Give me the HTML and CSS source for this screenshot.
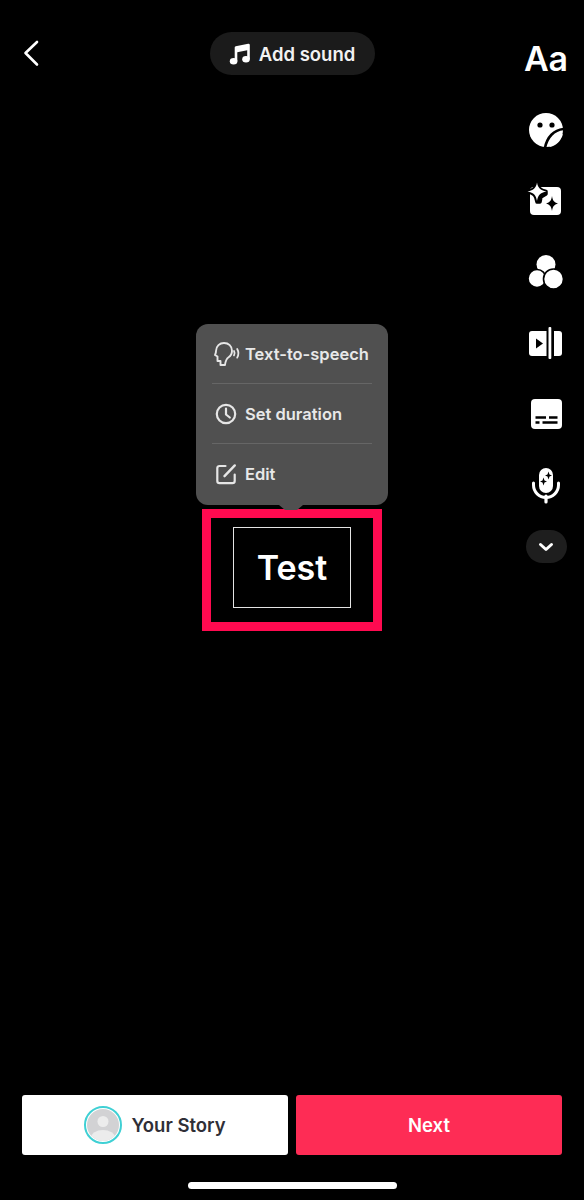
FILE: index.html
```html
<!DOCTYPE html>
<html lang="en">
<head>
<meta charset="utf-8">
<title>Story editor</title>
<link rel="stylesheet" href="styles.css">
</head>
<body>
<div class="screen">
  <div class="stage">
    <div class="back-col">
      <svg class="back-icon" width="20" height="30" viewBox="0 0 20 30"><path d="M15 4 L3.500 15 L15 26.500" fill="none" stroke="#fff" stroke-width="2.600" stroke-linecap="round" stroke-linejoin="round"/></svg>
    </div>
    <div class="canvas">
      <div class="sound-pill">
        <svg width="22" height="24" viewBox="0 0 22 24"><path d="M7 19 V5.500 L19.500 3 V17" fill="none" stroke="#fff" stroke-width="2.600" stroke-linejoin="round"/><path d="M7 6 L19.500 3.500 V8 L7 10.500 Z" fill="#fff"/><ellipse cx="4.600" cy="19.200" rx="3.800" ry="3.200"/><ellipse cx="17" cy="17.200" rx="3.800" ry="3.200"/></svg>
        <span>Add sound</span>
      </div>
      <div class="popup">
        <div class="popup-row">
          <svg class="popup-icon" width="28" height="26" viewBox="0 0 28 26"><path d="M12 24 H7.500 V20 H4.500 V15.500 L2 14 C2.600 12.600 3 12 3 10 C3 5 6.800 2 11 2 C15.600 2 19 5.200 19 9.800 C19 13 17.600 15 15.600 16.200 C14 17.200 12.600 19 12 24 Z" fill="none" stroke="#e6e6e6" stroke-width="1.900" stroke-linejoin="round"/><path d="M21 10 C21.800 11.400 21.800 13 21 14.400 M24.200 8 C25.800 10.800 25.800 13.800 24.200 16.600" fill="none" stroke="#e6e6e6" stroke-width="1.800" stroke-linecap="round"/></svg>
          <span>Text-to-speech</span>
        </div>
        <div class="popup-row">
          <svg class="popup-icon" width="28" height="26" viewBox="0 0 28 26"><circle cx="13" cy="13" r="9.200" fill="none" stroke="#e6e6e6" stroke-width="2.200"/><path d="M13 7.500 V13.500 L16.800 16.500" fill="none" stroke="#e6e6e6" stroke-width="2.200" stroke-linecap="round" stroke-linejoin="round"/></svg>
          <span>Set duration</span>
        </div>
        <div class="popup-row">
          <svg class="popup-icon" width="28" height="26" viewBox="0 0 28 26"><path d="M12.500 5 H6.500 A2.200 2.200 0 0 0 4.300 7.200 V20 A2.200 2.200 0 0 0 6.500 22.200 H19.500 A2.200 2.200 0 0 0 21.700 20 V13.500" fill="none" stroke="#e6e6e6" stroke-width="2.200" stroke-linecap="round"/><path d="M21.800 4.400 L11.500 15.200" fill="none" stroke="#e6e6e6" stroke-width="2.400" stroke-linecap="round"/></svg>
          <span>Edit</span>
        </div>
        <i class="popup-arrow"></i>
      </div>
      <div class="highlight">
        <div class="text-box">Test</div>
      </div>
    </div>
    <div class="rail">
      <div class="tool tool-text">Aa</div>
      <svg class="tool" width="40" height="40" viewBox="0 0 40 40"><circle cx="20" cy="20" r="17"/><circle cx="14" cy="15" r="2.600" fill="#000"/><circle cx="26" cy="15" r="2.600" fill="#000"/><path d="M37.500 19 C28 20 21 27 19 38" fill="none" stroke="#000" stroke-width="2.600"/><path d="M37 24 C31 26 25 31 23.500 37 C30 36 35 31 37 24 Z"/></svg>
      <svg class="tool" width="40" height="40" viewBox="0 0 40 40"><rect x="4" y="6" width="31" height="28" rx="4"/><path d="M11 1 C12 7 14 9 20 10.500 L20 13 L15 16 L14 21 L11 21 C10 14 8 12 1 10.500 C8 9 10 7 11 1 Z" fill="#000" stroke="#000" stroke-width="3.500" stroke-linejoin="round"/><path d="M11 1.500 C12 7 14 9 20.500 10.500 C14 12 12 14 11 20 C10 14 8 12 1.500 10.500 C8 9 10 7 11 1.500 Z"/><path d="M26 15 C26.800 20 28 21 32 22.500 C28 24 26.800 25 26 30 C25.200 25 24 24 20 22.500 C24 21 25.200 20 26 15 Z" fill="#000"/></svg>
      <svg class="tool" width="40" height="40" viewBox="0 0 40 40"><circle cx="20" cy="12.500" r="9.500"/><circle cx="11" cy="26.500" r="9" stroke="#000" stroke-width="1.600"/><circle cx="27.500" cy="27" r="10" stroke="#000" stroke-width="1.600"/></svg>
      <svg class="tool" width="40" height="40" viewBox="0 0 40 40"><path d="M6 8 H20.500 V33 H6 A3 3 0 0 1 3 30 V11 A3 3 0 0 1 6 8 Z"/><rect x="22.500" y="4" width="2.800" height="32" rx="1"/><path d="M28 8 H33 A3 3 0 0 1 36 11 V30 A3 3 0 0 1 33 33 H28 Z"/><path d="M10 15.500 L17 20.500 L10 25.500 Z" fill="#000"/></svg>
      <svg class="tool" width="40" height="40" viewBox="0 0 40 40"><rect x="5" y="5" width="31" height="30" rx="4"/><path d="M9.500 23.500 H20 M23 23.500 H31.500 M9.500 28.500 H13.500 M16.500 28.500 H31.500" stroke="#000" stroke-width="2.400" fill="none"/></svg>
      <svg class="tool" width="40" height="40" viewBox="0 0 40 40"><rect x="13" y="3" width="14" height="25" rx="7"/><path d="M7.500 18 V20 A12.500 12.500 0 0 0 32.500 20 V18" fill="none" stroke="#fff" stroke-width="3" stroke-linecap="round"/><path d="M20 31 V37" stroke="#fff" stroke-width="3.200" stroke-linecap="round"/><path d="M22.500 6.500 L23.500 9.500 L26 10.500 L23.500 11.500 L22.500 14.500 L21.500 11.500 L19 10.500 L21.500 9.500 Z" fill="#000"/><path d="M17.500 12.500 L18.500 15.500 L21 16.500 L18.500 17.500 L17.500 20.500 L16.500 17.500 L14 16.500 L16.500 15.500 Z" fill="#000"/></svg>
      <div class="more">
        <svg width="16" height="10" viewBox="0 0 16 10"><path d="M2.500 2.500 L8 7.500 L13.500 2.500" fill="none" stroke="#fff" stroke-width="3" stroke-linecap="round" stroke-linejoin="round"/></svg>
      </div>
    </div>
  </div>
  <div class="actions">
    <div class="btn btn-story">
      <span class="avatar">
        <svg width="32" height="32" viewBox="0 0 32 32"><defs><clipPath id="avatar-clip"><circle cx="16" cy="16" r="16"/></clipPath></defs><g clip-path="url(#avatar-clip)"><rect width="32" height="32" fill="#d2d2d4"/><circle cx="16" cy="12.500" r="5.500" fill="#ececec"/><ellipse cx="16" cy="29" rx="12" ry="8" fill="#ececec"/></g></svg>
      </span>
      <span>Your Story</span>
    </div>
    <div class="btn btn-next">Next</div>
  </div>
  <div class="home-row"><i class="home-bar"></i></div>
</div>
</body>
</html>
```

FILE: styles.css
```css
* { box-sizing: border-box; }
html, body { margin: 0; background: #000; }
body { font-family: "Inter", "Liberation Sans", sans-serif; }
svg { display: block; fill: #fff; }

.screen {
  width: 584px;
  height: 1200px;
  background: #000;
  display: flex;
  flex-direction: column;
  overflow: hidden;
}
.stage {
  flex: 1;
  display: grid;
  grid-template-columns: 76px 1fr 76px;
}
.back-col { padding: 38px 0 0 22px; }

.canvas {
  display: flex;
  flex-direction: column;
  align-items: center;
  padding-top: 32px;
}
.sound-pill {
  width: 165px;
  height: 43px;
  border-radius: 22px;
  background: #1b1b1b;
  color: #f2f2f2;
  font-size: 18.500px;
  font-weight: 600;
  display: flex;
  align-items: center;
  justify-content: center;
  gap: 8px;
}
.popup {
  position: relative;
  margin-top: 249px;
  width: 192px;
  height: 181px;
  padding: 0 16px;
  border-radius: 12px;
  background: #505050;
  color: #e8e8e8;
  font-size: 16.500px;
  font-weight: 600;
}
.popup-row {
  height: 60px;
  display: flex;
  align-items: center;
  gap: 4px;
  border-bottom: 1px solid #666;
}
.popup-row:last-of-type { border-bottom: 0; }
.popup-icon { margin-left: 1px; flex: none; }
.popup-arrow {
  position: absolute;
  left: 83px;
  top: 100%;
  width: 24px;
  height: 5px;
  background: #505050;
  clip-path: polygon(0 0, 100% 0, 75% 100%, 25% 100%);
}
.highlight {
  margin-top: 4px;
  width: 180px;
  height: 122px;
  padding: 9px 22px 14px;
  border: 9px solid #ff0a50;
}
.text-box {
  height: 81px;
  border: 1px solid #e4e4e4;
  color: #fff;
  font-size: 34px;
  font-weight: 600;
  display: flex;
  align-items: center;
  justify-content: center;
}

.rail {
  display: flex;
  flex-direction: column;
  align-items: center;
  padding-top: 39px;
  gap: 31px;
}
.tool { flex: none; width: 40px; height: 40px; }
.tool-text {
  color: #fff;
  font-size: 34px;
  font-weight: 600;
  line-height: 40px;
  display: flex;
  justify-content: center;
  white-space: nowrap;
}
.more {
  margin-top: -6px;
  width: 41px;
  height: 33px;
  border-radius: 17px;
  background: #1e1e1e;
  display: flex;
  align-items: center;
  justify-content: center;
}

.actions {
  display: flex;
  gap: 8px;
  padding: 0 22px;
}
.btn {
  flex: 1;
  height: 60px;
  border-radius: 3px;
  font-size: 18.500px;
  font-weight: 600;
  display: flex;
  align-items: center;
  justify-content: center;
}
.btn-story { background: #fff; color: #2f2f37; gap: 9px; }
.btn-next { background: #fe2c55; color: #fff; }
.avatar {
  width: 38px;
  height: 38px;
  border: 2px solid #3fd0d4;
  border-radius: 50%;
  display: flex;
  align-items: center;
  justify-content: center;
}
.home-row {
  height: 45px;
  padding-top: 27px;
  display: flex;
  justify-content: center;
}
.home-bar {
  width: 209px;
  height: 7px;
  border-radius: 4px;
  background: #fff;
}
```
